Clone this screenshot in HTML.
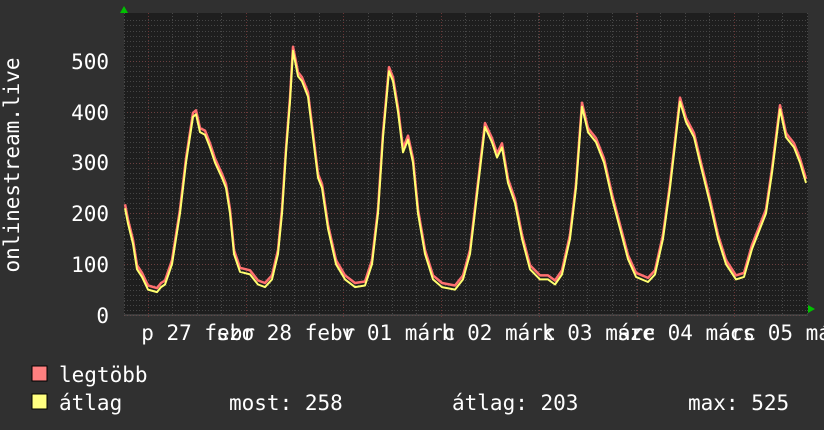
<!DOCTYPE html>
<html><head><meta charset="utf-8"><style>
html,body{margin:0;padding:0;background:#303030;width:824px;height:430px;overflow:hidden}
svg{display:block}
text{font-family:"DejaVu Sans Mono","Liberation Mono",monospace;font-size:21px;fill:#fff}
</style></head><body>
<svg id="s" width="824" height="430" xmlns="http://www.w3.org/2000/svg">
<rect width="824" height="430" fill="#303030"/>
<rect x="124" y="13" width="684" height="302" fill="#1e1e1e"/>
<g id="grid"></g>
<polyline id="red" fill="none" stroke="#ff7070" stroke-width="2.5" stroke-linejoin="round"/>
<polyline id="yel" fill="none" stroke="#ffff70" stroke-width="2" stroke-linejoin="round"/>
<polygon points="120,13 128,13 124,6" fill="#00c000"/>
<polygon points="808,305 808,313 815,309" fill="#00c000"/>
<line x1="124" y1="315" x2="808" y2="315" fill="none" stroke="#555" stroke-width="1"/>
<text x="109" y="69" text-anchor="end">500</text>
<text x="109" y="120" text-anchor="end">400</text>
<text x="109" y="170" text-anchor="end">300</text>
<text x="109" y="221" text-anchor="end">200</text>
<text x="109" y="272" text-anchor="end">100</text>
<text x="109" y="323" text-anchor="end">0</text>
<text transform="translate(19,165) rotate(-90)" text-anchor="middle">onlinestream.live</text>
<g id="xl"></g>
<rect x="32" y="366" width="15" height="15" fill="#ff8080" stroke="#000" stroke-width="1"/>
<rect x="32" y="394" width="15" height="15" fill="#ffff80" stroke="#000" stroke-width="1"/>
<text x="59" y="382">legtöbb</text>
<text x="59" y="410">átlag</text>
<text x="229" y="410">most: 258</text>
<text x="452" y="410">átlag: 203</text>
<text x="688" y="410">max: 525</text>
</svg>
<script>
var NS="http://www.w3.org/2000/svg",g=document.getElementById('grid');
function ln(x1,y1,x2,y2,c,d){var l=document.createElementNS(NS,'line');l.setAttribute('x1',x1);l.setAttribute('y1',y1);l.setAttribute('x2',x2);l.setAttribute('y2',y2);l.setAttribute('stroke',c);l.setAttribute('stroke-width',1);l.setAttribute('stroke-dasharray',d);g.appendChild(l);}
for(var v=0;v<=580;v+=10){var y=Math.round(315-v*0.508)+0.5;if(y<13)break;ln(124,y,808,y,v%100==0?'#6a4040':'#454545','1,2');}
for(var x=148-24.4;x<808;x+=24.4){var xx=Math.round(x)+0.5;ln(xx,13,xx,315,'#484848','1,2');}
for(var i=0;i<7;i++){var xx=Math.round(148+97.7*i)+0.5;ln(xx,13,xx,318,'#6a3535','1,2');}
var d=[[125,210],[128,180],[133,140],[137,90],[142,75],[148,50],[157,45],[161,55],[165,60],[172,100],[180,200],[186,300],[193,390],[196,395],[200,360],[205,355],[210,330],[215,300],[222,270],[226,250],[230,200],[234,120],[240,85],[250,80],[258,60],[265,55],[272,70],[278,120],[282,200],[286,320],[290,420],[293,520],[298,470],[302,460],[308,430],[313,350],[318,270],[322,250],[328,170],[336,100],[345,70],[355,55],[365,58],[372,100],[378,200],[383,350],[389,480],[393,460],[398,400],[403,320],[408,345],[413,300],[418,200],[425,120],[433,70],[442,55],[455,50],[463,70],[470,120],[476,220],[485,370],[492,340],[497,310],[502,330],[508,260],[515,220],[522,150],[530,90],[540,70],[548,70],[555,60],[562,80],[570,150],[576,250],[582,410],[588,360],[596,340],[604,300],[612,230],[620,170],[628,110],[636,75],[648,65],[655,80],[663,150],[670,250],[680,420],[686,380],[694,350],[700,300],[710,220],[718,150],[726,100],[736,70],[744,75],[752,130],[766,200],[772,280],[780,405],[786,350],[794,330],[800,300],[806,260]];
function pts(o){return d.map(function(p){return p[0]+','+(315-(p[1]+o)*0.508).toFixed(1)}).join(' ');}
document.getElementById('red').setAttribute('points',pts(8));
document.getElementById('yel').setAttribute('points',pts(0));
var labs=[['p','27','febr'],['szo','28','febr'],['v','01','márc'],['h','02','márc'],['k','03','márc'],['sze','04','márc'],['cs','05','márc']];
var xl=document.getElementById('xl');
labs.forEach(function(l,i){var c=179+100.2*i;var s=c-(l[0].length+2)*12.6;var t=document.createElementNS(NS,'text');t.setAttribute('x',s.toFixed(1));t.setAttribute('y',340);t.textContent=l.join(' ');xl.appendChild(t);});
</script>
</body></html>
